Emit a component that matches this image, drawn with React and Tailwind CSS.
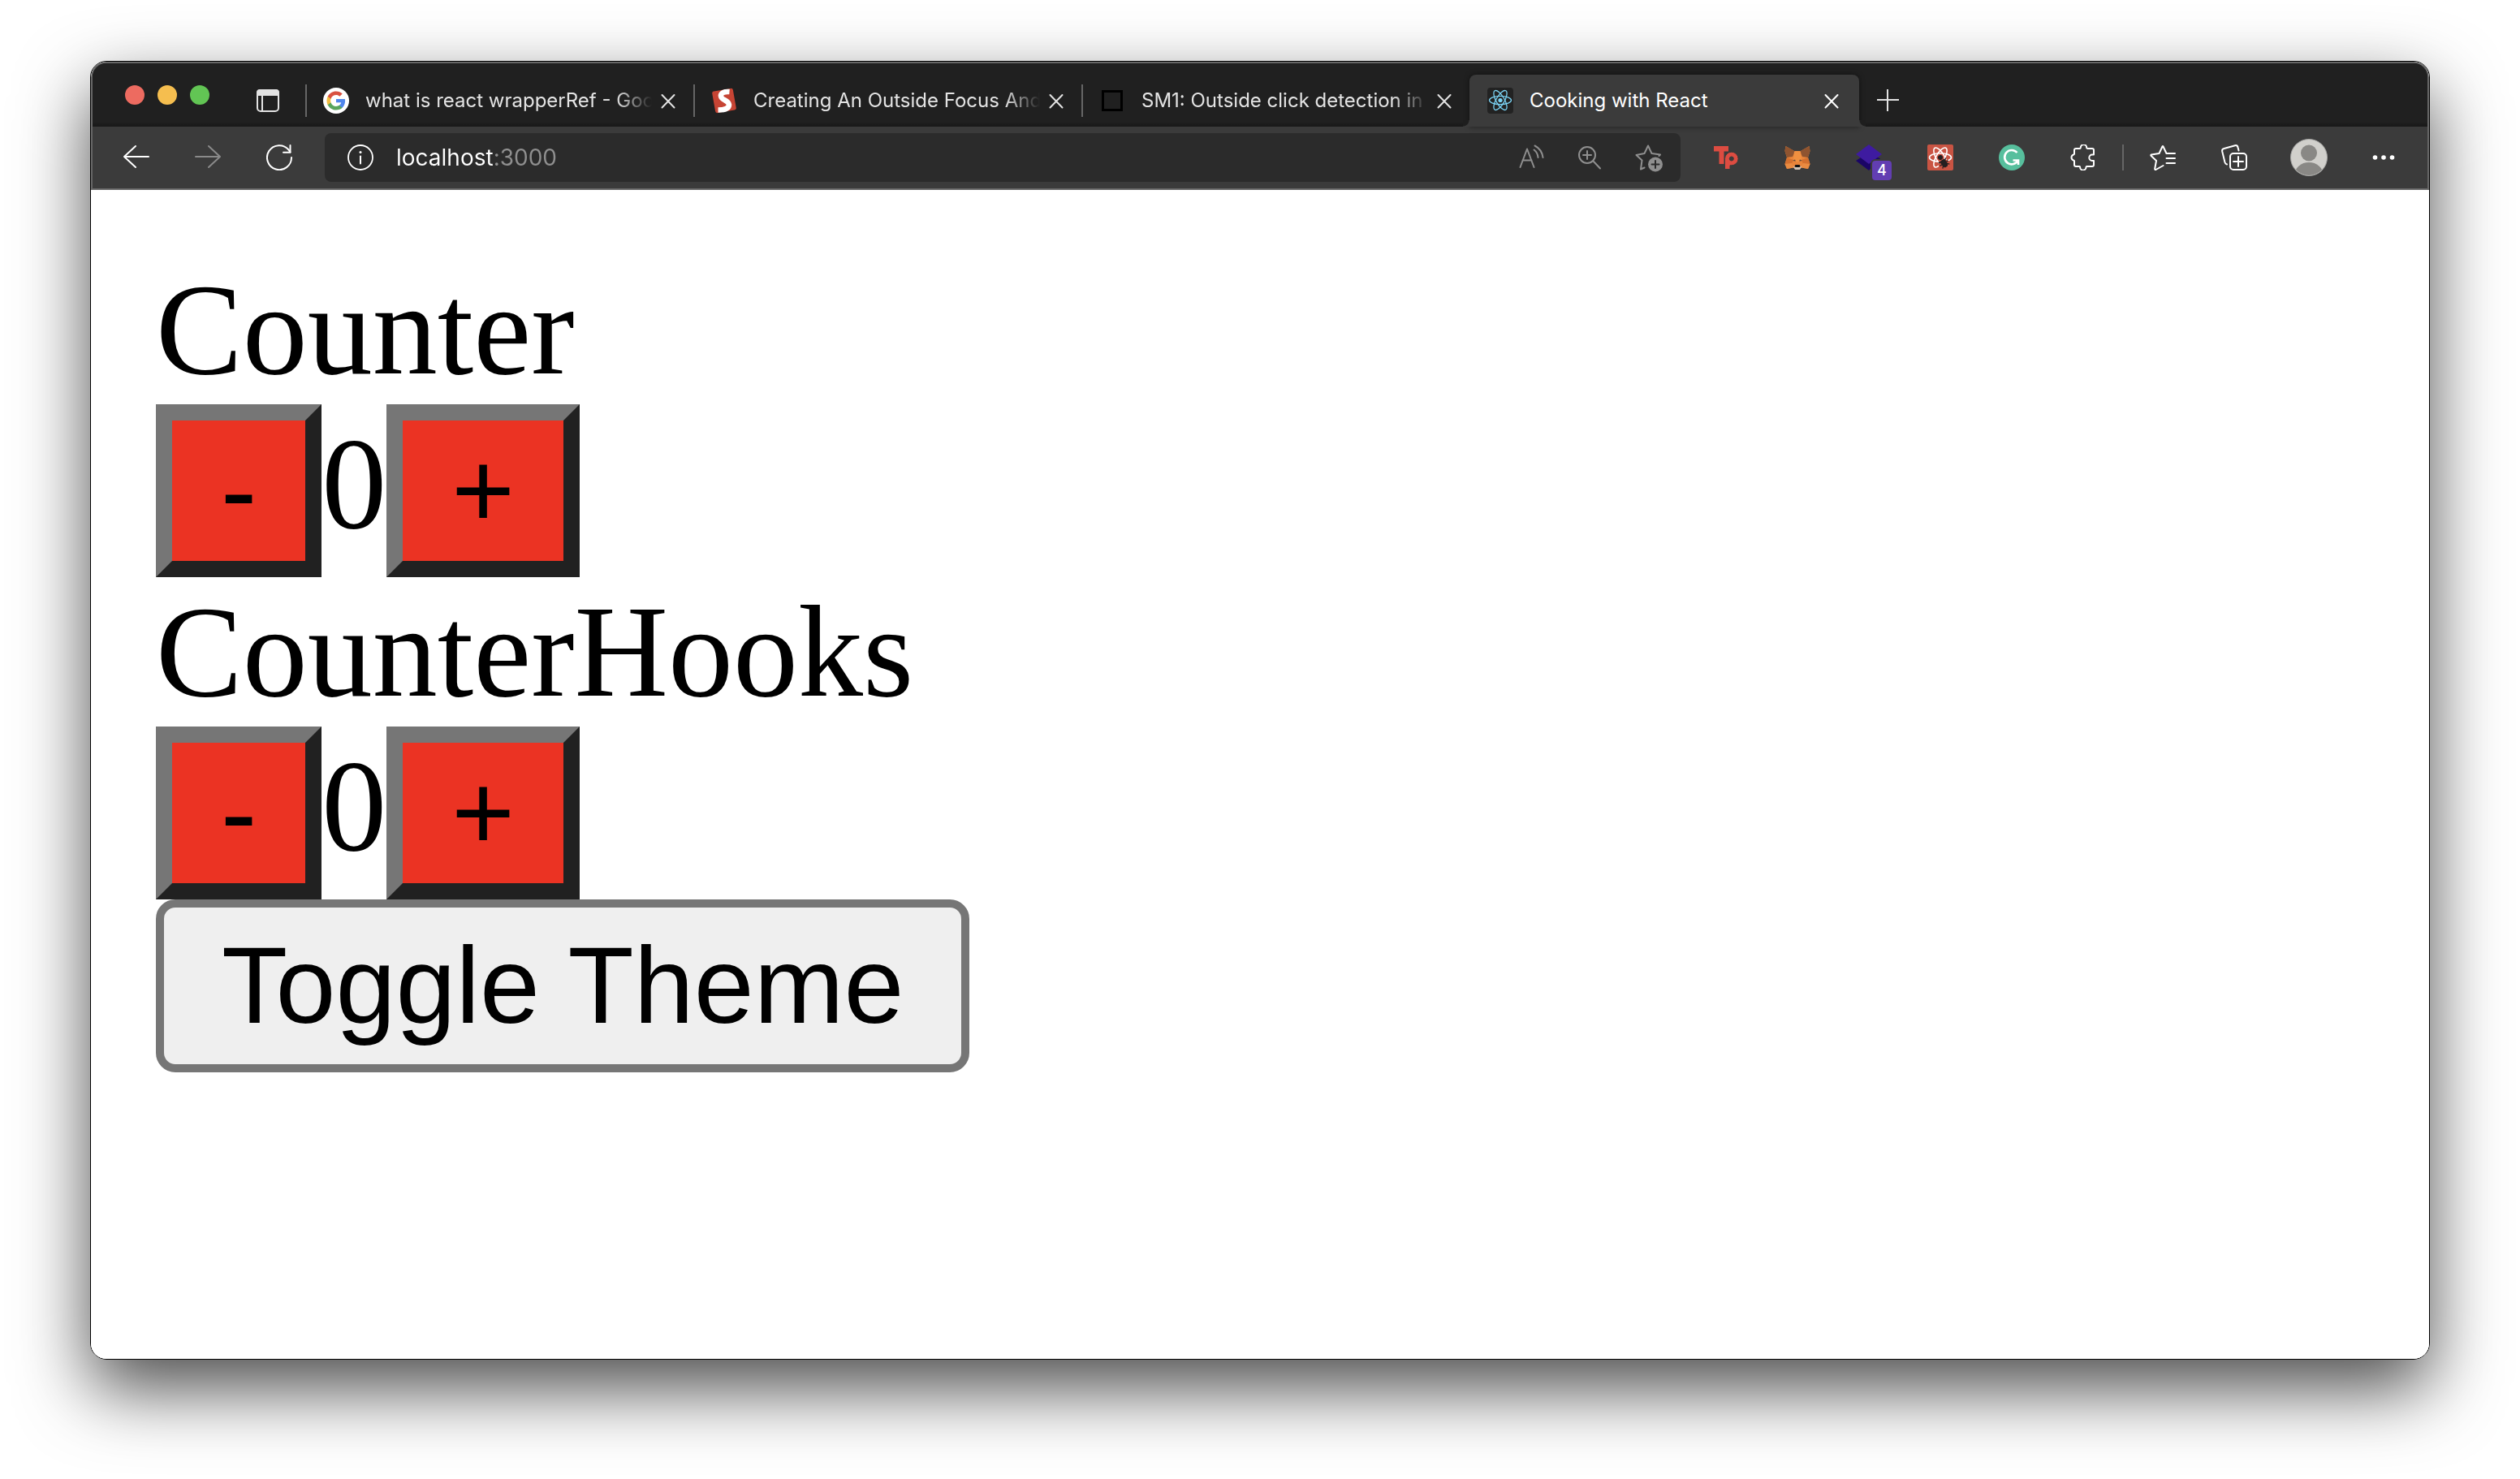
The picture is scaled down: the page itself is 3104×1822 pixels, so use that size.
import React, { useState } from "react";

function Svg({ children, className = "size-8", viewBox = "0 0 32 32" }) {
  return (
    <svg
      viewBox={viewBox}
      className={`shrink-0 ${className}`}
      fill="none"
      stroke="currentColor"
      strokeWidth="2"
      strokeLinecap="round"
      strokeLinejoin="round"
      aria-hidden="true"
    >
      {children}
    </svg>
  );
}

/* ---------- favicons ---------- */

function GoogleIcon() {
  return (
    <svg viewBox="0 0 32 32" className="size-8 shrink-0" aria-hidden="true">
      <circle cx="16" cy="16" r="16" fill="#fff" />
      <g transform="translate(3.4 3.4) scale(1.05)">
        <path fill="#4f86ec" d="M22.56 12.25c0-.78-.07-1.53-.2-2.25H12v4.26h5.92c-.26 1.37-1.04 2.53-2.21 3.31v2.77h3.57c2.08-1.92 3.28-4.74 3.28-8.09z" />
        <path fill="#58a55c" d="M12 23c2.97 0 5.46-.98 7.28-2.66l-3.57-2.77c-.98.66-2.23 1.06-3.71 1.06-2.86 0-5.29-1.93-6.16-4.53H2.18v2.84C3.99 20.53 7.7 23 12 23z" />
        <path fill="#f2bc42" d="M5.84 14.09c-.22-.66-.35-1.36-.35-2.09s.13-1.43.35-2.09V7.07H2.18C1.43 8.55 1 10.22 1 12s.43 3.45 1.18 4.93l3.66-2.84z" />
        <path fill="#d95140" d="M12 5.38c1.62 0 3.06.56 4.21 1.64l3.15-3.15C17.45 2.09 14.97 1 12 1 7.7 1 3.99 3.47 2.18 7.07l3.66 2.84c.87-2.6 3.3-4.53 6.16-4.53z" />
      </g>
    </svg>
  );
}

function SmashingIcon() {
  return (
    <svg viewBox="0 0 32 32" className="size-8 shrink-0" aria-hidden="true">
      <rect x="3" y="2.5" width="26" height="27" rx="2.5" fill="#c64434" transform="rotate(-10 16 16)" />
      <path
        d="M22.500 5C16 4.500 11.500 6.500 12 10.500C12.500 15.500 21.500 15.500 22 21C22 25.500 16 27.500 8.500 27.500"
        fill="none"
        stroke="#fff"
        strokeWidth="6.500"
      />
    </svg>
  );
}

function SquareIcon() {
  return (
    <svg viewBox="0 0 32 32" className="size-8 shrink-0" aria-hidden="true">
      <rect x="4.500" y="4.500" width="23" height="23" fill="none" stroke="#000" strokeWidth="3" />
    </svg>
  );
}

function ReactIcon() {
  return (
    <svg viewBox="0 0 32 32" className="size-8 shrink-0" aria-hidden="true">
      <rect width="32" height="32" rx="4" fill="#222" />
      <circle cx="16" cy="15.500" r="2.600" fill="#7bd3f4" />
      <g fill="none" stroke="#7bd3f4" strokeWidth="1.300">
        <ellipse cx="16" cy="15.500" rx="13.500" ry="5.100" />
        <ellipse cx="16" cy="15.500" rx="13.500" ry="5.100" transform="rotate(60 16 15.500)" />
        <ellipse cx="16" cy="15.500" rx="13.500" ry="5.100" transform="rotate(120 16 15.500)" />
      </g>
    </svg>
  );
}

/* ---------- extension icons ---------- */

function TpIcon() {
  return (
    <svg viewBox="0 0 32 32" className="size-8 shrink-0" aria-hidden="true">
      <path fill="#dd4c41" d="M1 2h18v6.500h-5.500v15.500h-6V8.500H1z" />
      <path
        fill="#dd4c41"
        stroke="#3b3b3b"
        strokeWidth="1"
        fillRule="evenodd"
        d="M14.500 30.500V17.500a8.300 8.300 0 1 1 8.300 8.300h-1.800v4.700zM22.800 15a2.500 2.500 0 1 0 0 5a2.500 2.500 0 1 0 0-5z"
      />
    </svg>
  );
}

function FoxIcon() {
  return (
    <svg viewBox="0 0 32 32" className="size-8 shrink-0" aria-hidden="true">
      <path fill="#e8843a" d="M1.500 2L12 8h8l10.500-6L31.500 8L29 16l2.500 8-2.500 6-8-1.500-2.500 2h-5l-2.500-2L3 30 .5 24 3 16 .5 8z" />
      <path fill="#8f5430" d="M1.500 2L13 8.500 10 15l-7 1L.5 8z" />
      <path fill="#8f5430" d="M30.500 2L19 8.500 22 15l7 1L31.500 8z" />
      <path fill="#f09040" d="M12 8.500h8L21 19l-5 3-5-3z" />
      <path fill="#d3702f" d="M3 16l8 3-2 5-8.500 0zM29 16l-8 3 2 5h8.500z" />
      <path fill="#e98b41" d="M.5 24L9 23l2.500 5.500L3 30zM31.500 24L23 23l-2.500 5.500L29 30z" />
      <path fill="#5b4538" d="M10 20l3-1.500.8 2zM22 20l-3-1.500-.8 2z" />
      <path fill="#cfc2b5" d="M10.500 26.500l3 1h5l3-1-2.500 4.500h-6z" />
      <path fill="#111" d="M13.300 25h5.400l.8 2.300-1.200.7h-4.600l-1.200-.7z" />
    </svg>
  );
}

function LayersIcon() {
  return (
    <svg viewBox="0 0 32 32" className="size-8 shrink-0" aria-hidden="true">
      <path fill="#1a0566" d="M0 20l6-4h20l4 1-14 15z" />
      <path fill="#3e1ba0" d="M16 0l16 12-16 12L0 12z" />
    </svg>
  );
}

function BugIcon() {
  return (
    <svg viewBox="0 0 32 32" className="size-8 shrink-0" aria-hidden="true">
      <rect width="32" height="32" rx="2" fill="#c95443" />
      <g fill="none" stroke="#fff" strokeWidth="1.600">
        <ellipse cx="16" cy="16" rx="13.500" ry="5.200" />
        <ellipse cx="16" cy="16" rx="13.500" ry="5.200" transform="rotate(60 16 16)" />
        <ellipse cx="16" cy="16" rx="13.500" ry="5.200" transform="rotate(120 16 16)" />
      </g>
      <path d="M14 19h11v10H14z" fill="#c95443" />
      <g transform="translate(16 16) rotate(-33)" fill="#231f20" stroke="#231f20" strokeWidth="1.300">
        <circle cx="0" cy="0" r="2.400" />
        <path d="M-2.800 4.500h5.600v6.500L1.500 13h-3l-1.300-2z" />
        <path fill="none" d="M-5.500 4l2.500 2M-6 8.500h3M-5 13l2.500-2.500M5.500 4L3 6M6 8.500H3M5 13l-2.500-2.500" />
      </g>
    </svg>
  );
}

function GrammarlyIcon() {
  return (
    <svg viewBox="0 0 32 32" className="size-8 shrink-0" aria-hidden="true">
      <circle cx="16" cy="16" r="16" fill="#57bf9d" />
      <path
        d="M22.500 10A8.700 8.700 0 1 0 23.700 19.500M17.500 19.500H24V25"
        fill="none"
        stroke="#fff"
        strokeWidth="2.600"
      />
    </svg>
  );
}

/* ---------- chrome glyphs ---------- */

function CloseButton({ label, tone }) {
  return (
    <button type="button" aria-label={label} className={`flex size-6 shrink-0 items-center justify-center ${tone}`}>
      <Svg className="size-6" viewBox="0 0 24 24">
        <path d="M4.500 5L19.500 20.500M19.500 5L4.500 20.500" />
      </Svg>
    </button>
  );
}

const TABS = [
  { title: "what is react wrapperRef - Goo", Icon: GoogleIcon },
  { title: "Creating An Outside Focus And", Icon: SmashingIcon },
  { title: "SM1: Outside click detection in", Icon: SquareIcon },
];

function InactiveTab({ title, Icon }) {
  return (
    <div className="flex h-16 w-[478px] min-w-0 items-center pr-[19px]">
      <span className="h-10 w-0.5 shrink-0 bg-[#666]" />
      <button type="button" className="ml-5 flex min-w-0 flex-1 items-center gap-5 text-left text-[#e3e3e3]">
        <Icon />
        <span className="min-w-0 flex-1 overflow-hidden whitespace-nowrap [mask-image:linear-gradient(to_right,black_calc(100%-44px),transparent)]">
          {title}
        </span>
      </button>
      <span className="w-2 shrink-0" />
      <CloseButton label={`Close ${title}`} tone="text-[#e3e3e3]" />
    </div>
  );
}

function ActiveTab() {
  return (
    <div className="relative flex h-16 w-[480px] min-w-0 items-center rounded-t-lg bg-[#3b3b3b] pr-[22px] pl-[22px] shadow-[0_0_6px_rgba(0,0,0,0.5)]">
      <span className="absolute bottom-0 -left-2 size-2 bg-[radial-gradient(circle_at_0_0,#1e1e1e_7px,#3b3b3b_8px)]" />
      <span className="absolute -right-2 bottom-0 size-2 bg-[radial-gradient(circle_at_100%_0,#1e1e1e_7px,#3b3b3b_8px)]" />
      <button type="button" className="flex min-w-0 flex-1 items-center gap-5 text-left text-white">
        <ReactIcon />
        <span className="whitespace-nowrap">Cooking with React</span>
      </button>
      <CloseButton label="Close Cooking with React" tone="text-white" />
    </div>
  );
}

function TabStrip() {
  return (
    <div className="flex h-[78px] items-end bg-[linear-gradient(to_top,#181818,#202020_6px)] pl-10 text-[24px] leading-8">
      <div className="flex gap-4 self-start pt-[27px]">
        <button type="button" aria-label="Close window" className="size-6 rounded-full bg-[#ed6b60]" />
        <button type="button" aria-label="Minimize window" className="size-6 rounded-full bg-[#f5be4f]" />
        <button type="button" aria-label="Zoom window" className="size-6 rounded-full bg-[#62c554]" />
      </div>
      <button type="button" aria-label="Tab actions" className="mr-0.5 ml-7 flex h-16 w-22 items-center justify-center text-[#e3e3e3]">
        <Svg>
          <rect x="3" y="3" width="26" height="26" rx="4" />
          <path d="M3 9V6a3 3 0 0 1 3-3h20a3 3 0 0 1 3 3v3z" fill="currentColor" />
          <path d="M9 9v20" />
        </Svg>
      </button>
      {TABS.map((tab) => (
        <InactiveTab key={tab.title} {...tab} />
      ))}
      <ActiveTab />
      <button type="button" aria-label="New tab" className="flex h-16 w-18 items-center justify-center text-[#e3e3e3]">
        <Svg>
          <path d="M15 2v27M2 15h27" strokeLinecap="butt" />
        </Svg>
      </button>
    </div>
  );
}

function ToolButton({ label, width = "w-22", tone = "text-white", children }) {
  return (
    <button type="button" aria-label={label} className={`flex h-15 shrink-0 items-center justify-center ${width} ${tone}`}>
      {children}
    </button>
  );
}

function AddressBar() {
  return (
    <div className="mx-3 flex h-15 min-w-0 flex-1 items-center rounded-lg bg-[#2b2b2b] pr-[3px]">
      <ToolButton label="View site information">
        <Svg>
          <circle cx="16" cy="16" r="15" strokeWidth="1.800" />
          <path d="M16 14.500v9" />
          <circle cx="16" cy="9.500" r="1.500" fill="currentColor" stroke="none" />
        </Svg>
      </ToolButton>
      <input
        type="text"
        aria-label="Address"
        defaultValue="localhost:3000"
        className="h-15 min-w-0 flex-1 bg-[linear-gradient(to_right,#fff_122px,#8f8f8f_122px)] bg-clip-text text-[28px] text-transparent outline-none"
      />
      <ToolButton label="Read aloud" width="w-18" tone="text-[#8f8f8f]">
        <Svg>
          <path d="M1.500 28L10 5.500L18.500 28M4.500 19.500h11" />
          <path d="M18.500 6.500a13 13 0 0 1 5 9.500M19.500 1.500a19 19 0 0 1 10 14.500" />
        </Svg>
      </ToolButton>
      <ToolButton label="Zoom" width="w-18" tone="text-[#8f8f8f]">
        <Svg>
          <circle cx="12" cy="13" r="10" />
          <path d="M19.500 20.500L28 29.500M12 8v10M7 13h10" />
        </Svg>
      </ToolButton>
      <ToolButton label="Add to favorites" width="w-18" tone="text-[#8f8f8f]">
        <Svg className="size-9" viewBox="0 0 36 36">
          <path d="M12.500 30.500L8 32.500L9.500 21.500L2.500 15L12.500 13L17 3.500L21.500 13L32 14.500L30.500 16" />
          <circle cx="26" cy="26.500" r="9" fill="currentColor" stroke="none" />
          <path d="M26 22v9M21.500 26.500h9" stroke="#2b2b2b" />
        </Svg>
      </ToolButton>
    </div>
  );
}

function Toolbar() {
  return (
    <div className="flex items-center bg-[#3b3b3b] px-2.5 py-2">
      <ToolButton label="Back">
        <Svg>
          <path d="M31 15H1M15 2L1 15l14 13" />
        </Svg>
      </ToolButton>
      <ToolButton label="Forward" tone="text-[#8a8a8a]">
        <Svg>
          <path d="M1 15h30M17 2l14 13-14 13" />
        </Svg>
      </ToolButton>
      <ToolButton label="Refresh">
        <Svg>
          <path d="M31 16A15 15 0 1 1 27.500 6.500L29.500 9.500" />
          <path d="M29.500 1v8.800H21" />
        </Svg>
      </ToolButton>
      <AddressBar />
      <ToolButton label="Tp extension">
        <TpIcon />
      </ToolButton>
      <ToolButton label="Wallet extension">
        <FoxIcon />
      </ToolButton>
      <ToolButton label="Layers extension">
        <span className="relative size-8">
          <LayersIcon />
          <span className="absolute top-5 left-5 flex size-6 items-center justify-center rounded bg-[#623eb2] text-[18px] leading-6 font-medium ring-2 ring-[#3b3b3b]">
            4
          </span>
        </span>
      </ToolButton>
      <ToolButton label="React debugger">
        <BugIcon />
      </ToolButton>
      <ToolButton label="Writing assistant">
        <GrammarlyIcon />
      </ToolButton>
      <ToolButton label="Extensions">
        <Svg>
          <path d="M7 5h4.500a1.300 1.300 0 0 0 1.300-1.300a3.700 3.700 0 0 1 7.400 0a1.300 1.300 0 0 0 1.300 1.300H27a2 2 0 0 1 2 2v5.500h-2a3.700 3.700 0 0 0 0 7.400h2V25a2 2 0 0 1-2 2h-6.500a1 1 0 0 0-1 1a3.700 3.700 0 0 1-7.400 0a1 1 0 0 0-1-1H7a2 2 0 0 1-2-2v-4.500a1.200 1.200 0 0 0-1-1a3.700 3.700 0 0 1 0-7a1.200 1.200 0 0 0 1-1V7a2 2 0 0 1 2-2z" />
        </Svg>
      </ToolButton>
      <span className="mx-1 h-8 w-0.5 shrink-0 bg-[#666]" />
      <ToolButton label="Favorites">
        <Svg>
          <path d="M31 11H20.500L16.500 2.500Q16 1.500 15.500 2.500L11.500 11L2 12.500Q.7 13 1.700 14L8 20L6.200 30Q6.200 31.500 7.500 31L16.500 26" />
          <path d="M20.500 17H31M20.500 23H31" />
        </Svg>
      </ToolButton>
      <ToolButton label="Collections">
        <Svg>
          <path d="M7 24.500A4 4 0 0 1 4.500 22L1.200 8.500A3 3 0 0 1 3.500 5L17 1.200A3 3 0 0 1 20.500 3.500L21.500 7.500" />
          <rect x="11" y="11" width="20" height="20" rx="4" />
          <path d="M21 15v12M15 21h12" />
        </Svg>
      </ToolButton>
      <ToolButton label="Profile" width="w-24">
        <svg viewBox="0 0 46 46" className="size-[46px]" aria-hidden="true">
          <clipPath id="avatar">
            <circle cx="23" cy="23" r="22" />
          </clipPath>
          <circle cx="23" cy="23" r="22.500" fill="#d1d0cc" stroke="#a5a5a3" />
          <g clipPath="url(#avatar)" fill="#898885">
            <circle cx="23" cy="17.500" r="10" />
            <ellipse cx="23" cy="44" rx="17.500" ry="15" />
          </g>
        </svg>
      </ToolButton>
      <ToolButton label="Settings and more">
        <Svg>
          <g fill="currentColor" stroke="none">
            <circle cx="5.500" cy="16" r="2.800" />
            <circle cx="16" cy="16" r="2.800" />
            <circle cx="26.500" cy="16" r="2.800" />
          </g>
        </Svg>
      </ToolButton>
    </div>
  );
}

/* ---------- page ---------- */

function CounterButton({ label, onClick, children }) {
  return (
    <button
      type="button"
      aria-label={label}
      onClick={onClick}
      className="border-20 border-t-[#767676] border-r-[#212121] border-b-[#212121] border-l-[#767676] bg-[#eb3323] px-15 py-2.5 font-['Liberation_Sans',Arial,sans-serif] text-[133px] leading-[153px]"
    >
      {children}
    </button>
  );
}

function Counter({ title }) {
  const [count, setCount] = useState(0);
  return (
    <section>
      <h2>{title}</h2>
      <div className="flex items-baseline">
        <CounterButton label={`Decrease ${title}`} onClick={() => setCount(count - 1)}>
          -
        </CounterButton>
        <span>{count}</span>
        <CounterButton label={`Increase ${title}`} onClick={() => setCount(count + 1)}>
          +
        </CounterButton>
      </div>
    </section>
  );
}

export default function App() {
  const [dark, setDark] = useState(false);
  return (
    <div className="flex min-h-screen flex-col bg-white px-[111px] pt-[75px] pb-[147px]">
      <div className="flex flex-1 flex-col overflow-hidden rounded-[20px] border border-black shadow-[0_36px_88px_rgba(0,0,0,0.7)]">
        <header className="overflow-hidden rounded-t-[19px] border-2 border-[#666] bg-[#202020] font-['Inter',sans-serif]">
          <TabStrip />
          <Toolbar />
        </header>
        <main
          className={`flex-1 p-20 font-['Liberation_Serif','Times_New_Roman',serif] text-[160px] leading-[184px] text-black ${
            dark ? "bg-gray-700" : "bg-white"
          }`}
        >
          <Counter title="Counter" />
          <Counter title="CounterHooks" />
          <button
            type="button"
            onClick={() => setDark(!dark)}
            className="block rounded-3xl border-10 border-[#767676] bg-[#efefef] px-[71px] py-5 font-['Liberation_Sans',Arial,sans-serif] text-[133px] leading-[153px]"
          >
            Toggle Theme
          </button>
        </main>
      </div>
    </div>
  );
}
